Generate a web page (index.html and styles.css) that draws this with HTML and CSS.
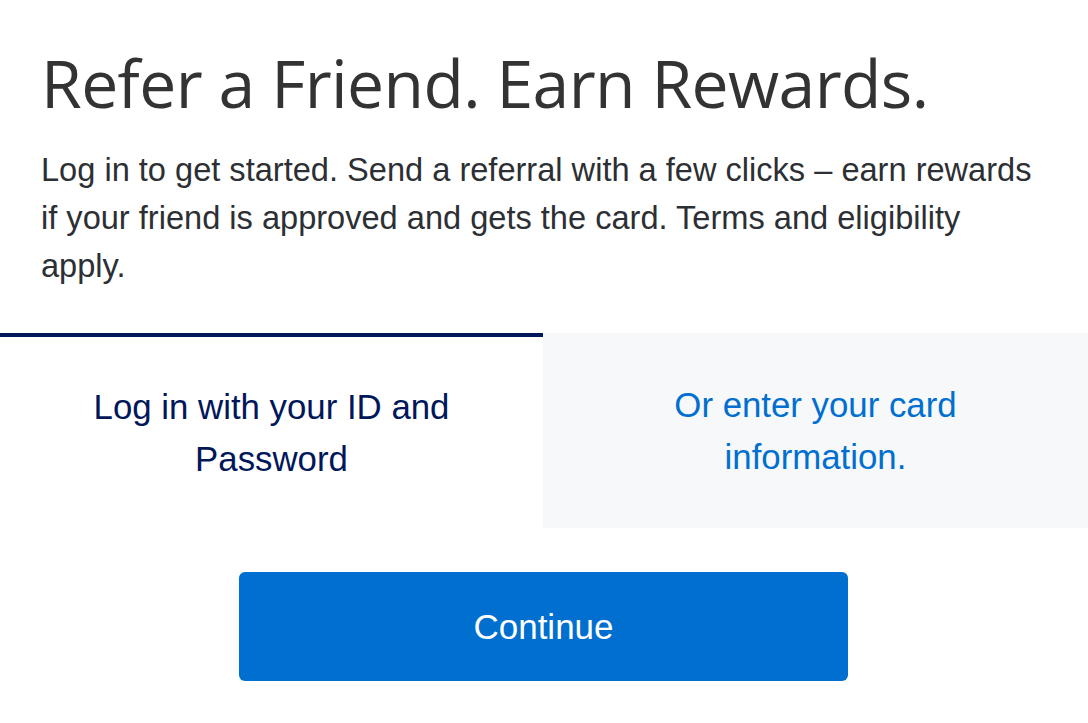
FILE: index.html
```html
<!DOCTYPE html>
<html lang="en">
<head>
<meta charset="utf-8">
<title>Refer a Friend</title>
<link rel="stylesheet" href="styles.css">
</head>
<body>
<main class="page">
  <section class="intro">
    <h1 class="title">Refer a Friend. Earn Rewards.</h1>
    <p class="lead">Log in to get started. Send a referral with a few clicks – earn rewards if your friend is approved and gets the card. Terms and eligibility apply.</p>
  </section>
  <nav class="tabs">
    <div class="tab tab-active">Log in with your ID and<br>Password</div>
    <div class="tab tab-inactive"><a class="tab-link" href="#">Or enter your card<br>information.</a></div>
  </nav>
  <div class="actions">
    <button class="btn-primary" type="button">Continue</button>
  </div>
</main>
</body>
</html>
```

FILE: styles.css
```css
html, body {
  margin: 0;
  padding: 0;
  background: #ffffff;
}
.page {
  width: 1088px;
  font-family: "Liberation Sans", Arial, sans-serif;
}
.intro {
  padding: 38px 40px 0 41px;
}
.title {
  margin: 0;
  font-family: "Open Sans", "Liberation Sans", sans-serif;
  font-weight: 400;
  font-size: 66px;
  line-height: 88px;
  color: #333333;
  letter-spacing: -0.6px;
}
.lead {
  margin: 20px 0 0 0;
  font-size: 32.6px;
  line-height: 48px;
  color: #2c2f33;
}
.tabs {
  display: grid;
  grid-template-columns: 543px 545px;
  margin-top: 43px;
}
.tab {
  height: 195px;
  display: flex;
  align-items: center;
  justify-content: center;
  text-align: center;
  font-size: 34.8px;
  line-height: 52px;
  box-sizing: border-box;
}
.tab-active {
  border-top: 4px solid #00175a;
  color: #00175a;
}
.tab-inactive {
  background: #f7f8f9;
}
.tab-link {
  color: #006fcf;
  text-decoration: none;
}
.actions {
  display: flex;
  justify-content: center;
  padding-top: 44px;
}
.btn-primary {
  width: 609px;
  height: 109px;
  margin-left: -1px;
  border: 0;
  border-radius: 6px;
  background: #006fcf;
  color: #ffffff;
  font-family: "Liberation Sans", Arial, sans-serif;
  font-size: 35px;
}
```
